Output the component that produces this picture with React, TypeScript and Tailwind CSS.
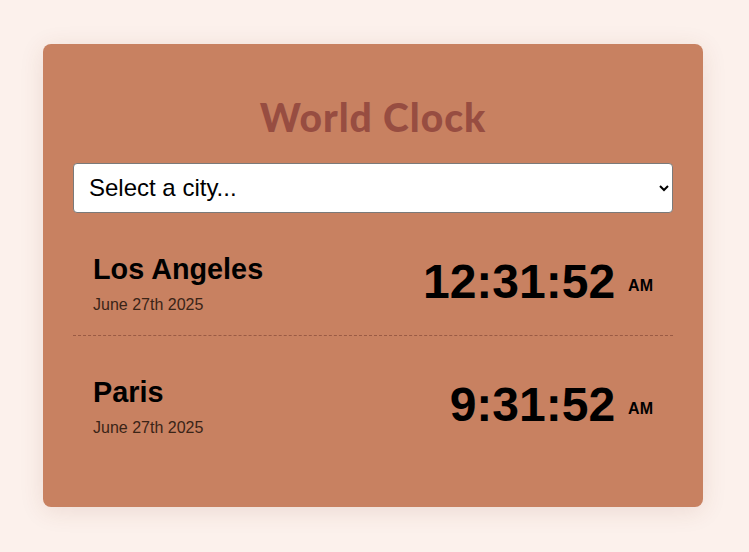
import { useState } from 'react';

interface CityClock {
	name: string;
	date: string;
	time: string;
	period: string;
}

const clocks: CityClock[] = [
	{ name: 'Los Angeles', date: 'June 27th 2025', time: '12:31:52', period: 'AM' },
	{ name: 'Paris', date: 'June 27th 2025', time: '9:31:52', period: 'AM' },
];

/** A single city row: name + date on the left, big time on the right. */
function ClockRow({ clock, last }: { clock: CityClock; last: boolean }) {
	return (
		<li
			className={
				'flex items-start justify-between px-5 pt-[40px] pb-[21px] ' +
				(last ? '' : 'border-b border-dashed border-[#9a5a44]')
			}
		>
			<div className="flex flex-col">
				<span className="text-[28.8px] leading-[33px] font-bold text-black">{clock.name}</span>
				<span className="mt-[10px] text-[16px] leading-[18px] text-[#3a2417]">{clock.date}</span>
			</div>
			<div className="mt-[1px] flex items-center">
				<span className="text-[48px] leading-[55px] font-bold text-black">{clock.time}</span>
				<span className="ml-[13px] mt-[10px] text-[16px] font-bold text-black">{clock.period}</span>
			</div>
		</li>
	);
}

export default function App() {
	const [city, setCity] = useState('');

	return (
		<div className="flex min-h-screen items-center justify-center bg-[#fcf1ec] pr-[3px] pb-[2px] font-['Liberation_Sans',Arial,sans-serif]">
			<div className="w-[660px] rounded-[8px] bg-[#c88161] px-[30px] pt-[30px] pb-[49px] shadow-[0_4px_24px_rgba(120,60,30,0.12)]">
				<h1 className="mt-[21px] mb-[24px] text-center font-['Lato',sans-serif] text-[39px] leading-[44px] font-black tracking-[1px] text-[#974d41]">
					World Clock
				</h1>
				<select
					value={city}
					onChange={(e) => setCity(e.target.value)}
					className="h-[50px] w-full rounded-[4px] border border-[#7a7a7a] bg-white pl-[11px] pr-2 text-[24px] text-black"
				>
					<option value="">Select a city...</option>
					<option value="tokyo">Tokyo</option>
					<option value="london">London</option>
					<option value="new-york">New York</option>
				</select>
				<ul className="flex flex-col">
					{clocks.map((c, i) => (
						<ClockRow key={c.name} clock={c} last={i === clocks.length - 1} />
					))}
				</ul>
			</div>
		</div>
	);
}
